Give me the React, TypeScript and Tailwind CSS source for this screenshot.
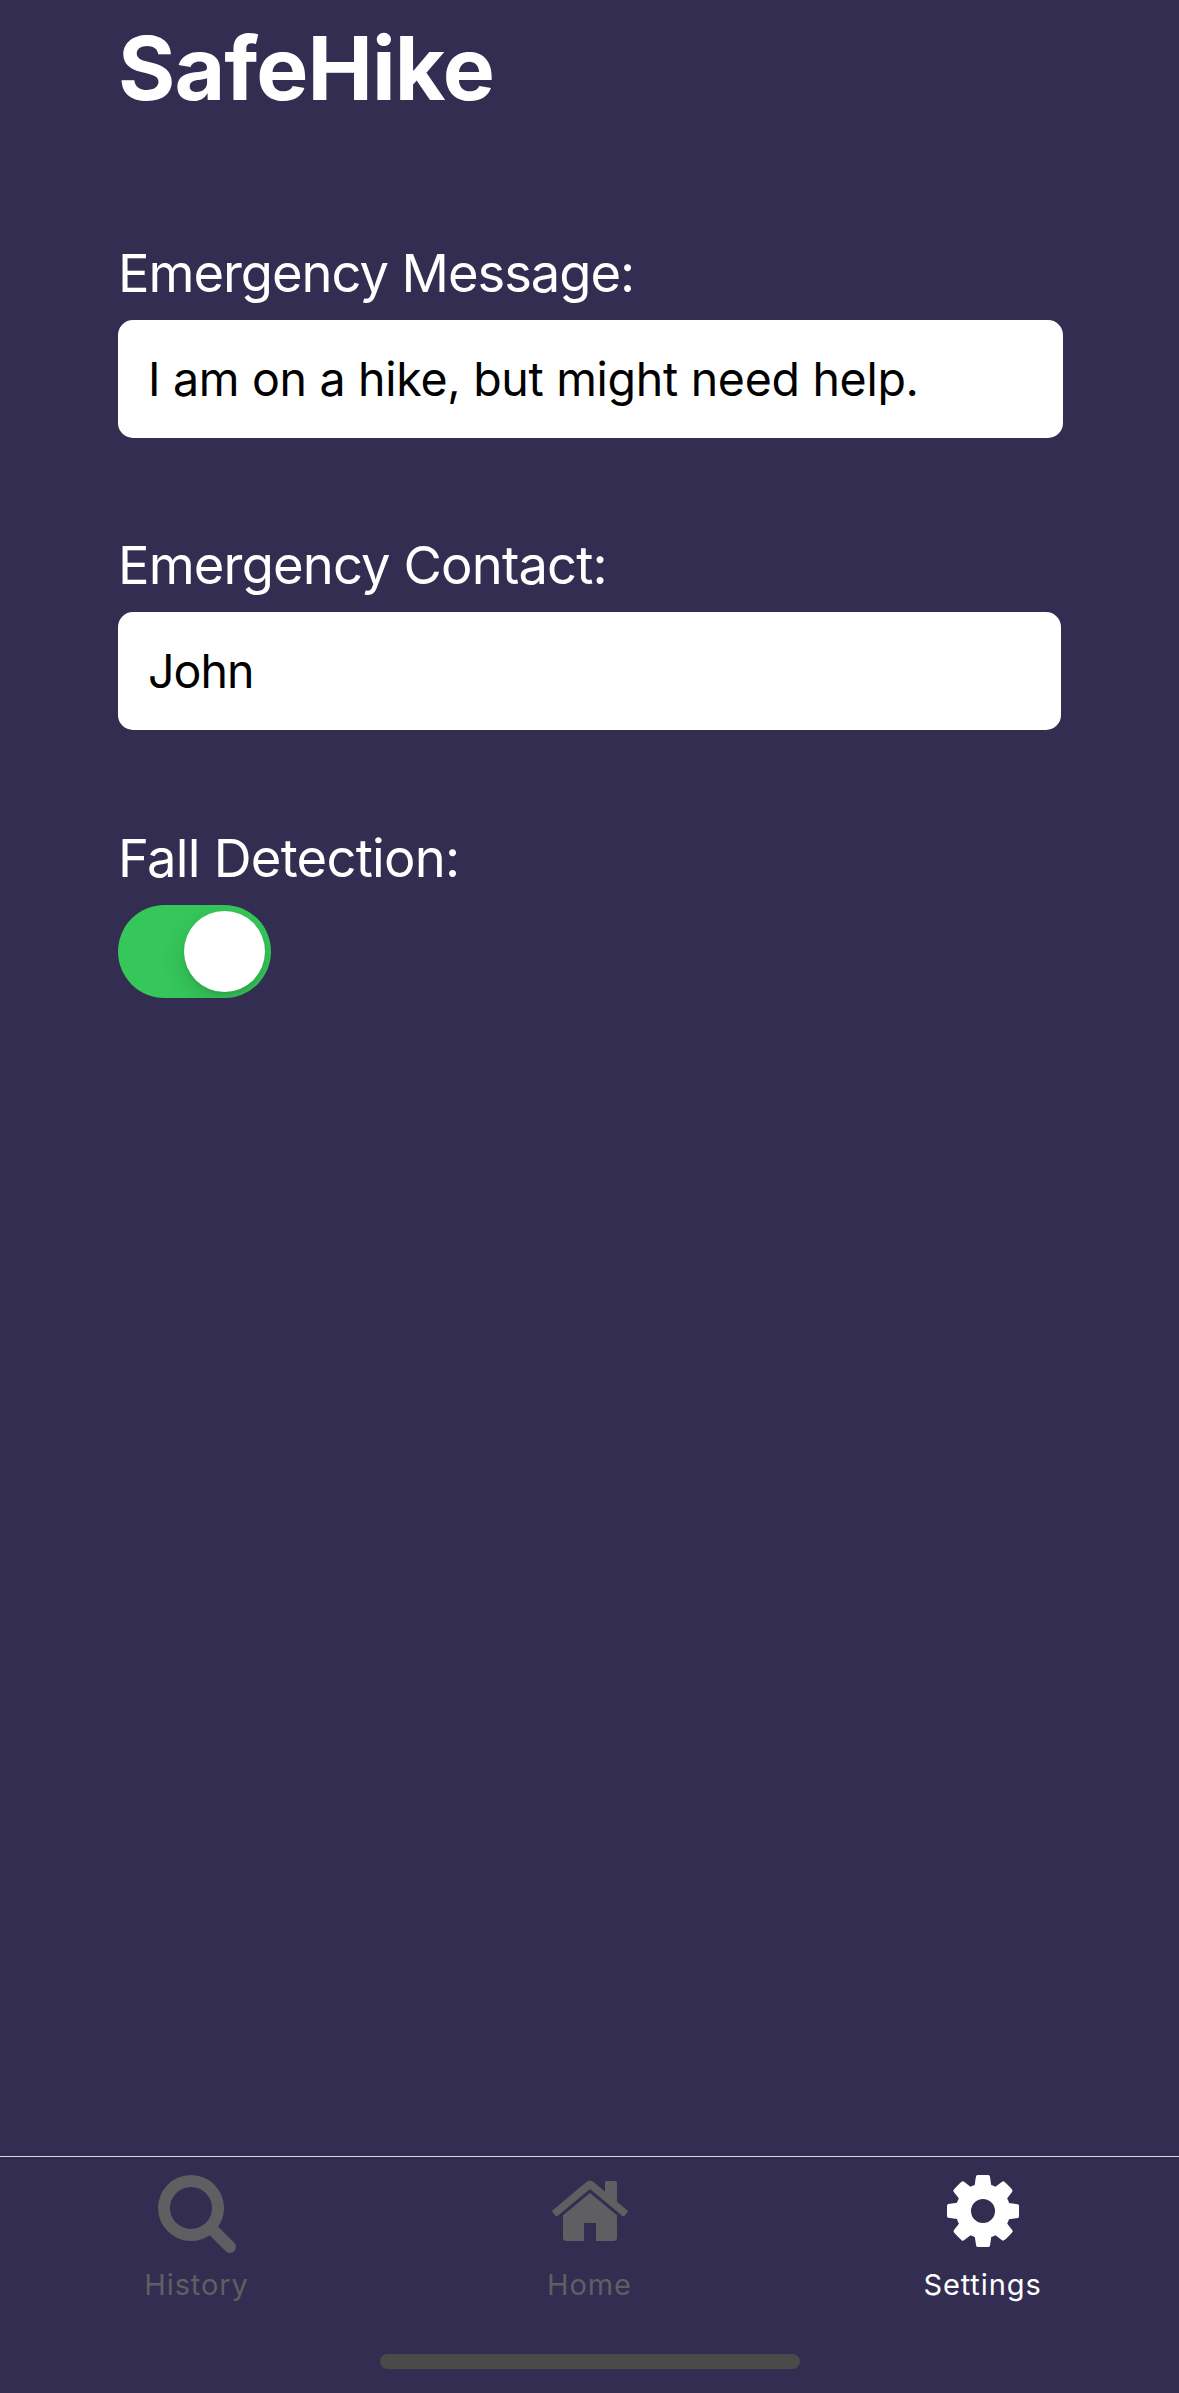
import { useState } from "react";
import type { ReactNode } from "react";

function SearchIcon() {
  return (
    <svg viewBox="0 0 1664 1664" className="block h-[78px] w-[78px]" fill="currentColor" fillRule="evenodd">
      <path d="M1152 704q0 185-131.5 316.5t-316.5 131.5-316.5-131.5-131.5-316.5 131.5-316.5 316.5-131.5 316.5 131.5 131.5 316.5zm512 832q0 52-38 90t-90 38q-54 0-90-38l-343-342q-179 124-399 124-143 0-273.5-55.5t-225-150-150-225-55.5-273.5 55.5-273.5 150-225 225-150 273.5-55.5 273.5 55.5 225 150 150 225 55.5 273.5q0 220-124 399l343 343q37 37 37 90z" />
    </svg>
  );
}

function HomeIcon() {
  return (
    <svg viewBox="0 128 1664 1664" className="block h-[78px] w-[78px]" fill="currentColor">
      <path d="M1408 992v480q0 26-19 45t-45 19h-384v-384h-256v384h-384q-26 0-45-19t-19-45v-480q0-1 .5-3t.5-3l575-474 575 474q1 2 1 6zm223-69l-62 74q-8 9-21 11h-3q-13 0-21-7l-692-577-692 577q-12 8-24 7-13-2-21-11l-62-74q-8-10-7-23.5t11-21.5l719-599q32-26 76-26t76 26l244 204v-195q0-14 9-23t23-9h192q14 0 23 9t9 23v408l219 182q10 8 11 21.5t-7 23.5z" />
    </svg>
  );
}

function CogIcon() {
  return (
    <svg viewBox="0 0 1536 1536" className="block h-[72px] w-[72px]" fill="currentColor" fillRule="evenodd">
      <path d="M1024 768q0-106-75-181t-181-75-181 75-75 181 75 181 181 75 181-75 75-181zm512-109v222q0 12-8 23t-20 13l-185 28q-19 54-39 91 35 50 107 138 10 12 10 25t-9 23q-27 37-99 108t-94 71q-12 0-26-9l-138-108q-44 23-91 38-16 136-29 186-7 28-36 28h-222q-14 0-24.5-8.5t-11.5-21.5l-28-184q-49-16-90-37l-141 107q-10 9-25 9-14 0-25-11-126-114-165-168-7-10-7-23 0-12 8-23 15-21 51-66.5t54-70.5q-27-50-41-99l-183-27q-13-2-21-12.5t-8-23.5v-222q0-12 8-23t19-13l186-28q14-46 39-92-40-57-107-138-10-12-10-24 0-10 9-23 26-36 98.5-107.5t94.5-71.5q13 0 26 10l138 107q44-23 91-38 16-136 29-186 7-28 36-28h222q14 0 24.5 8.5t11.5 21.5l28 184q49 16 90 37l142-107q9-9 24-9 13 0 25 10 129 119 165 170 7 8 7 22 0 12-8 23-15 21-51 66.5t-54 70.5q26 50 41 98l183 28q13 2 21 12.5t8 23.5z" />
    </svg>
  );
}

function Label({ children, className }: { children: ReactNode; className: string }) {
  return (
    <div className={`mb-[15px] whitespace-nowrap text-[52.5px] leading-[64px] ${className}`}>
      {children}
    </div>
  );
}

function Tab({ icon, label, className }: { icon: ReactNode; label: string; className: string }) {
  return (
    <button className={`flex w-1/3 flex-col items-center pt-[18px] ${className}`}>
      <div className="h-[92px]">{icon}</div>
      <span className="text-[29px] leading-9 tracking-[0.9px]">{label}</span>
    </button>
  );
}

export default function App() {
  const [fallDetection, setFallDetection] = useState(true);

  return (
    <div className="flex h-[2393px] w-[1179px] flex-col bg-[#322d51] font-['Inter',sans-serif] text-white">
      <main className="flex flex-1 flex-col items-start pl-[118px] pt-[18px]">
        <h1 className="mb-[123px] text-[87.5px] font-bold leading-[100px] tracking-[-0.9px]">SafeHike</h1>

        <Label className="tracking-[-1.05px]">Emergency Message:</Label>
        <div className="mb-[95px] flex h-[118px] w-[945px] items-center rounded-[15px] bg-white pl-[30px] pt-px text-[46.5px] tracking-[-0.3px] text-black">
          I am on a hike, but might need help.
        </div>

        <Label className="tracking-[-0.85px]">Emergency Contact:</Label>
        <div className="mb-24 flex h-[118px] w-[943px] items-center rounded-[15px] bg-white pl-[30px] pt-px text-[46.5px] tracking-[-1px] text-black">
          John
        </div>

        <Label className="tracking-[-0.75px]">Fall Detection:</Label>
        <button
          role="switch"
          aria-checked={fallDetection}
          aria-label="Fall Detection"
          onClick={() => setFallDetection(!fallDetection)}
          className={`flex h-[93px] w-[153px] items-center overflow-hidden rounded-full p-1.5 ${
            fallDetection ? "justify-end bg-[#35c759]" : "justify-start bg-[#787880]"
          }`}
        >
          <span className="h-[81px] w-[81px] rounded-full bg-white shadow-[0_9px_24px_rgba(0,0,0,0.15),0_3px_3px_rgba(0,0,0,0.06)]" />
        </button>
      </main>

      <nav className="flex h-[198px] border-t border-[#d8d8d8]">
        <Tab icon={<SearchIcon />} label="History" className="text-[#5f5f61]" />
        <Tab icon={<HomeIcon />} label="Home" className="text-[#5f5f61]" />
        <Tab icon={<CogIcon />} label="Settings" className="text-white" />
      </nav>
      <div className="mb-6 h-[15px] w-[420px] self-center rounded-full bg-[#4a4a4a]" />
    </div>
  );
}
